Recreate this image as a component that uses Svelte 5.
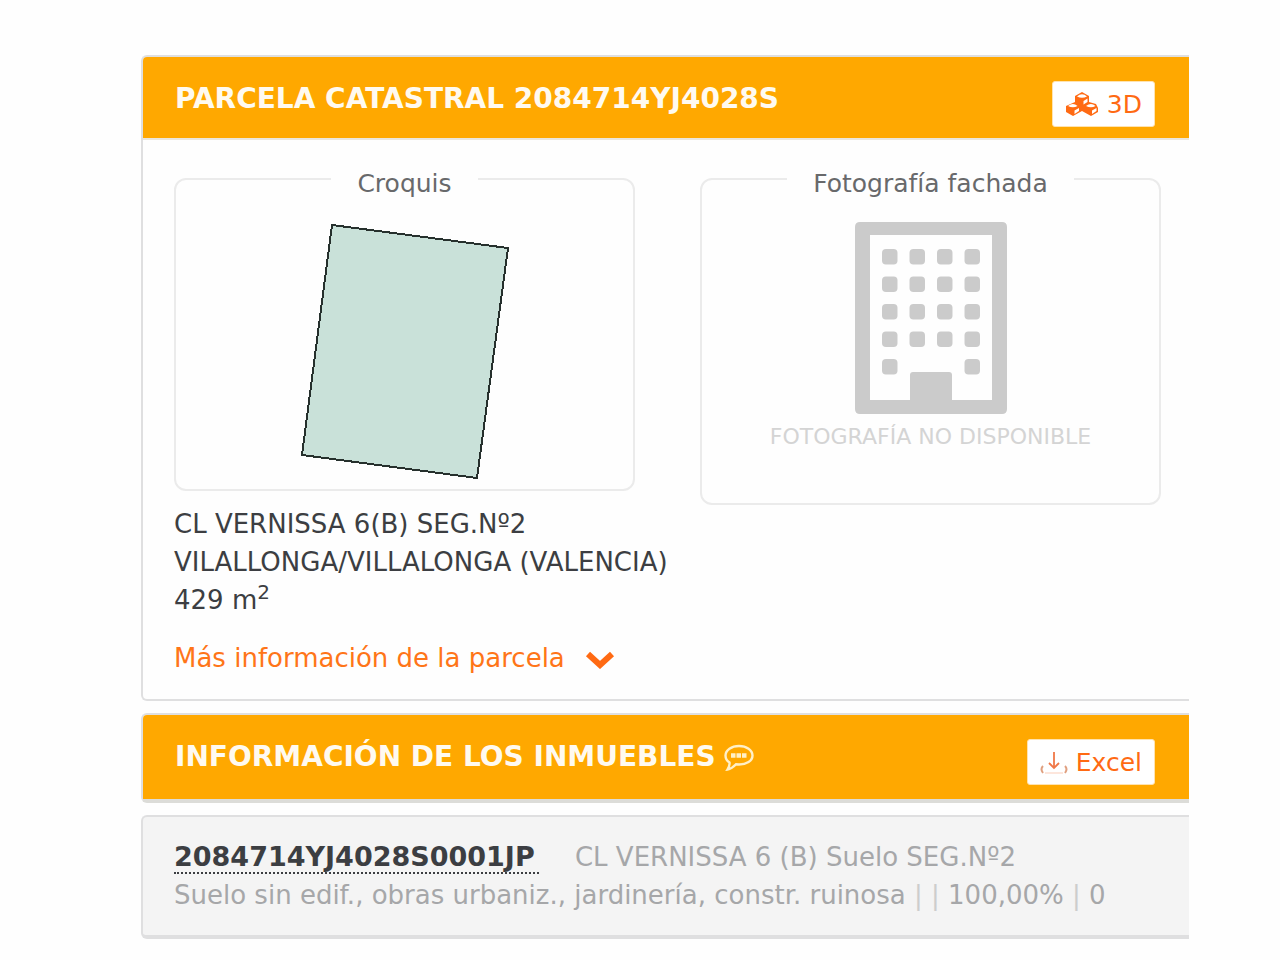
<script lang="ts">
    const parcela = {
        referencia: "2084714YJ4028S",
        direccion: "CL VERNISSA 6(B) SEG.Nº2",
        municipio: "VILALLONGA/VILLALONGA (VALENCIA)",
        superficie: 429,
    };

    const inmuebles = [
        {
            referencia: "2084714YJ4028S0001JP",
            direccion: "CL VERNISSA 6 (B) Suelo SEG.Nº2",
            uso: "Suelo sin edif., obras urbaniz., jardinería, constr. ruinosa",
            coeficiente: "100,00%",
            antiguedad: "0",
        },
    ];

    // window grid of the building icon, the door takes the middle of the last row
    const windows: { x: number; y: number }[] = [];
    for (let row = 0; row < 5; row++) {
        for (let col = 0; col < 4; col++) {
            if (row === 4 && (col === 1 || col === 2)) continue;
            windows.push({ x: 27 + col * 27.5, y: 27 + row * 27.5 });
        }
    }
</script>

<main>
    <section class="panel parcel">
        <header class="bar">
            <h2>PARCELA CATASTRAL {parcela.referencia}</h2>
            <button type="button">
                <svg width="34" height="26" viewBox="0 0 34 26" aria-hidden="true">
                    <g fill="#ff6a13">
                        <path d="M10 5 L17 1 L24 5 V11 L31 13 L33 17 V21 L26 25 L17 20 L8 25 L1 21 V15 L10 11 Z" />
                    </g>
                    <g fill="#fff">
                        <path d="M12 5.500 Q17 1 22 5.500 Q17 8 12 5.500 Z" />
                        <path d="M18.500 10 L22.500 7.500 V11 L18.500 13.500 Z" />
                        <path d="M3 15 Q8 11 12.500 15 Q8 17.500 3 15 Z" />
                        <path d="M9.500 19.500 L14 17 V20 L9.500 23 Z" />
                        <path d="M21 15 Q26 11 30.500 15 Q26 17.500 21 15 Z" />
                        <path d="M27 19.500 L31.500 17 V20 L27 23 Z" />
                    </g>
                </svg>
                3D
            </button>
        </header>

        <div class="body">
            <div class="figures">
                <fieldset>
                    <legend>Croquis</legend>
                    <svg class="sketch" width="212" height="260" viewBox="0 0 212 260" role="img" aria-label="Croquis de la parcela">
                        <path
                            d="M33 3 L209 26 L178 256 L3 233 Z"
                            fill="#c9e1d9"
                            stroke="#26302d"
                            stroke-width="2"
                            shape-rendering="crispEdges"
                        />
                    </svg>
                </fieldset>
                <fieldset>
                    <legend>Fotografía fachada</legend>
                    <svg class="building" width="152" height="192" viewBox="0 0 152 192" aria-hidden="true">
                        <path
                            d="M5 0 H147 Q152 0 152 5 V187 Q152 192 147 192 H5 Q0 192 0 187 V5 Q0 0 5 0 Z M15 13 V178 H55 V153 Q55 150 58 150 H94 Q97 150 97 153 V178 H137 V13 Z"
                            fill="#cbcbcb"
                            fill-rule="evenodd"
                        />
                        {#each windows as w}
                            <rect x={w.x} y={w.y} width="15.500" height="15.500" rx="4" fill="#cbcbcb" />
                        {/each}
                    </svg>
                    <p class="missing">FOTOGRAFÍA NO DISPONIBLE</p>
                </fieldset>
            </div>

            <address>
                {parcela.direccion}<br />
                {parcela.municipio}<br />
                {parcela.superficie} m<sup>2</sup>
            </address>

            <a class="more" href="#parcela">
                Más información de la parcela
                <svg width="30" height="22" viewBox="0 0 30 22" aria-hidden="true">
                    <path d="M3 7 L15 18 L27 7" fill="none" stroke="#ff6a13" stroke-width="6" />
                </svg>
            </a>
        </div>
    </section>

    <section class="panel title-only">
        <header class="bar">
            <h2>
                INFORMACIÓN DE LOS INMUEBLES
                <svg width="30" height="28" viewBox="0 0 30 28" aria-hidden="true">
                    <path
                        d="M15 3 C22.500 3 28.500 7 28.500 12.500 C28.500 18 22.500 21.500 15 21.500 L12 21.300 C10 23.500 7 26 3.500 26.500 C5 24 6 22 5.500 19.500 C3 18 1.500 15.500 1.500 12.500 C1.500 7 7.500 3 15 3 Z"
                        fill="none"
                        stroke="#fff0c8"
                        stroke-width="2.400"
                    />
                    <path d="M7 12.500 H23" stroke="#fff0c8" stroke-width="4.500" stroke-dasharray="4.500 1" />
                </svg>
            </h2>
            <button type="button">
                <svg width="28" height="26" viewBox="0 0 28 26" aria-hidden="true">
                    <path d="M14 3 V18 M9 14 L14 19 L19 14" fill="none" stroke="#f07848" stroke-width="1.800" />
                    <path d="M3 17 Q0 20 3 24 M25 17 Q28 20 25 24" fill="none" stroke="#e0a080" stroke-width="2" />
                    <path d="M5 24 H23" stroke="#fde6dc" stroke-width="2" />
                </svg>
                Excel
            </button>
        </header>
    </section>

    {#each inmuebles as inmueble}
        <section class="panel property">
            <div>
                <a href="#inmueble">{inmueble.referencia}</a>
                <span>{inmueble.direccion}</span>
            </div>
            <div>
                {inmueble.uso} <i>|</i> <i>|</i> {inmueble.coeficiente} <i>|</i> {inmueble.antiguedad}
            </div>
        </section>
    {/each}
</main>

<style>
    :global(body) {
        margin: 0;
        background: #fefefe;
    }

    main {
        display: flex;
        flex-direction: column;
        gap: 12px;
        padding: 55px 91px 20px 141px;
        font-family: Verdana, "DejaVu Sans", sans-serif;
        font-size: 26px;
        line-height: 38px;
        color: #3c3e42;
    }

    .panel {
        border: 2px solid #dfdfe0;
        border-right: none;
        border-radius: 6px 0 0 6px;
        background: #fefefe;
    }

    .bar {
        display: flex;
        justify-content: space-between;
        align-items: flex-start;
        padding: 24px 34px 11px 32px;
        border-radius: 4px 0 0 0;
        background: #ffa800;
    }

    h2 {
        display: flex;
        align-items: center;
        gap: 8px;
        margin: 0;
        font-size: 28px;
        line-height: 36px;
        color: #fffaf0;
    }

    button {
        display: flex;
        align-items: center;
        gap: 8px;
        height: 46px;
        padding: 0 12px;
        border: 1px solid #ffe3b0;
        border-radius: 3px;
        background: #fff;
        color: #ff6a13;
        font-family: inherit;
        font-size: 25px;
        cursor: pointer;
    }

    .parcel .bar {
        border-bottom: 2px solid #ebe6dc;
    }

    .body {
        padding: 28px 28px 22px 31px;
    }

    .figures {
        display: grid;
        grid-template-columns: 1fr 1fr;
        align-items: start;
        gap: 65px;
    }

    fieldset {
        display: flex;
        flex-direction: column;
        align-items: center;
        min-width: 0;
        margin: 0;
        padding: 32px 0 7px;
        border: 2px solid #ebebeb;
        border-radius: 12px;
    }

    legend {
        margin: 0 auto;
        padding: 10px 26px 0;
        font-size: 25px;
        line-height: 12px;
        color: #68696b;
    }

    svg {
        display: block;
        flex: none;
    }

    .missing {
        margin: 0;
        padding: 4px 0 40px;
        font-size: 22px;
        color: #d4d4d4;
    }

    address {
        font-style: normal;
        white-space: nowrap;
    }

    sup {
        font-size: 20px;
        line-height: 0;
    }

    .more {
        display: flex;
        align-items: center;
        gap: 20px;
        margin-top: 20px;
        color: #ff7518;
        text-decoration: none;
    }

    .title-only {
        border-bottom: 4px solid #dcdcd8;
    }

    .title-only .bar {
        padding-bottom: 14px;
    }

    .property {
        padding: 21px 31px;
        border-bottom-width: 4px;
        background: #f4f4f4;
        color: #a6a7a9;
    }

    .property a {
        margin-right: 28px;
        padding-right: 4px;
        border-bottom: 2px dotted #3c3e42;
        color: #3c3e42;
        font-size: 27px;
        font-weight: bold;
        text-decoration: none;
    }

    i {
        color: #cdcdcd;
        font-style: normal;
    }
</style>
